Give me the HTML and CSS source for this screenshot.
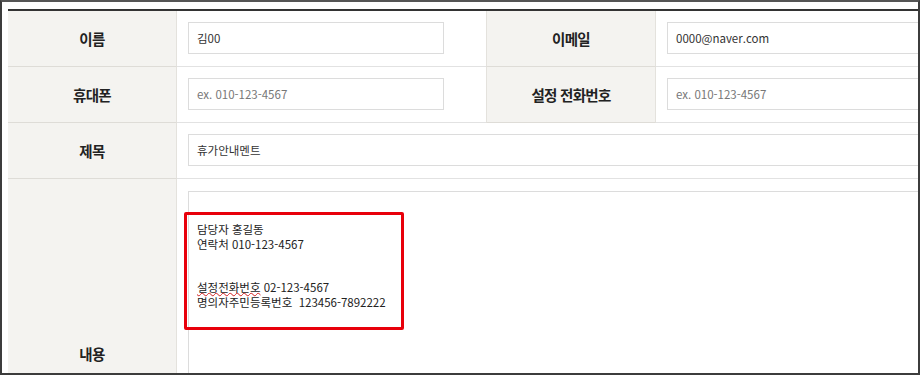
FILE: index.html
```html
<!DOCTYPE html>
<html lang="ko">
<head>
<meta charset="utf-8">
<title>문의 양식</title>
<link rel="stylesheet" href="styles.css">
</head>
<body>
<div class="frame">
  <div class="form">
    <div class="label">이름</div>
    <div class="cell"><div class="input short">김00</div></div>
    <div class="label second">이메일</div>
    <div class="cell"><div class="input wide">0000@naver.com</div></div>

    <div class="label">휴대폰</div>
    <div class="cell"><div class="input short placeholder">ex. 010-123-4567</div></div>
    <div class="label second">설정 전화번호</div>
    <div class="cell"><div class="input wide placeholder">ex. 010-123-4567</div></div>

    <div class="label">제목</div>
    <div class="cell span3"><div class="input wide">휴가안내멘트</div></div>

    <div class="label tall">내용</div>
    <div class="cell span3 tallcell">
      <div class="textarea"><span>담당자 홍길동</span>
<span>연락처 010-123-4567</span>
<span>&nbsp;</span>
<span>&nbsp;</span>
<span><span class="spell">설정전화번호</span> 02-123-4567</span>
<span>명의자주민등록번호&nbsp; 123456-7892222</span></div>
      <div class="highlight"></div>
    </div>
  </div>
</div>
</body>
</html>
```

FILE: styles.css
```css
html, body {
  margin: 0;
  padding: 0;
  background: #ffffff;
}

.frame {
  width: 920px;
  height: 375px;
  box-sizing: border-box;
  border: 2px solid #3c3c3c;
  border-top-color: #555555;
  overflow: hidden;
  padding: 7px 0 0 6px;
  background: #ffffff;
  font-family: "Noto Sans CJK KR", "Noto Sans", sans-serif;
}

.form {
  display: grid;
  grid-template-columns: 169px 310px 169px 1fr;
  border-top: 2px solid #333333;
}

.label {
  display: flex;
  align-items: center;
  justify-content: center;
  background: #f4f3f0;
  border-right: 1px solid #e4e2dd;
  border-bottom: 1px solid #dedcd7;
  font-size: 14.5px;
  font-weight: 700;
  color: #222222;
  letter-spacing: -0.7px;
  height: 55px;
  box-sizing: content-box;
}

.label.second {
  border-left: 1px solid #e4e2dd;
  margin-left: -1px;
}

.cell {
  border-bottom: 1px solid #e2e2e2;
  padding: 11px 0 12px 11px;
  height: 32px;
  box-sizing: content-box;
  min-width: 0;
}

.span3 {
  grid-column: span 3;
}

.input {
  height: 32px;
  box-sizing: border-box;
  border: 1px solid #dcdcdc;
  background: #ffffff;
  padding: 0 8px;
  display: flex;
  align-items: center;
  font-size: 11.5px;
  color: #333333;
  white-space: nowrap;
}

.input.short {
  width: 256px;
}

.input.wide {
  width: calc(100% + 4px);
}

.input.placeholder {
  color: #777777;
}

.label.tall {
  height: 348px;
  align-items: center;
}

.tallcell {
  height: auto;
  position: relative;
  padding-bottom: 0;
}

.textarea {
  height: 360px;
  box-sizing: border-box;
  border: 1px solid #dcdcdc;
  border-right: none;
  margin-top: 1px;
  padding: 30px 7px 0 8px;
  display: flex;
  flex-direction: column;
  font-size: 11.5px;
  line-height: 14.6px;
  color: #222222;
  white-space: nowrap;
}

.spell {
  text-decoration-line: underline;
  text-decoration-style: wavy;
  text-decoration-color: #d42020;
  text-decoration-thickness: 1px;
  text-underline-offset: 0px;
}

.highlight {
  position: absolute;
  left: 7px;
  top: 33px;
  width: 220px;
  height: 118px;
  box-sizing: border-box;
  border: 3px solid #e8000b;
  border-radius: 2px;
}
```
